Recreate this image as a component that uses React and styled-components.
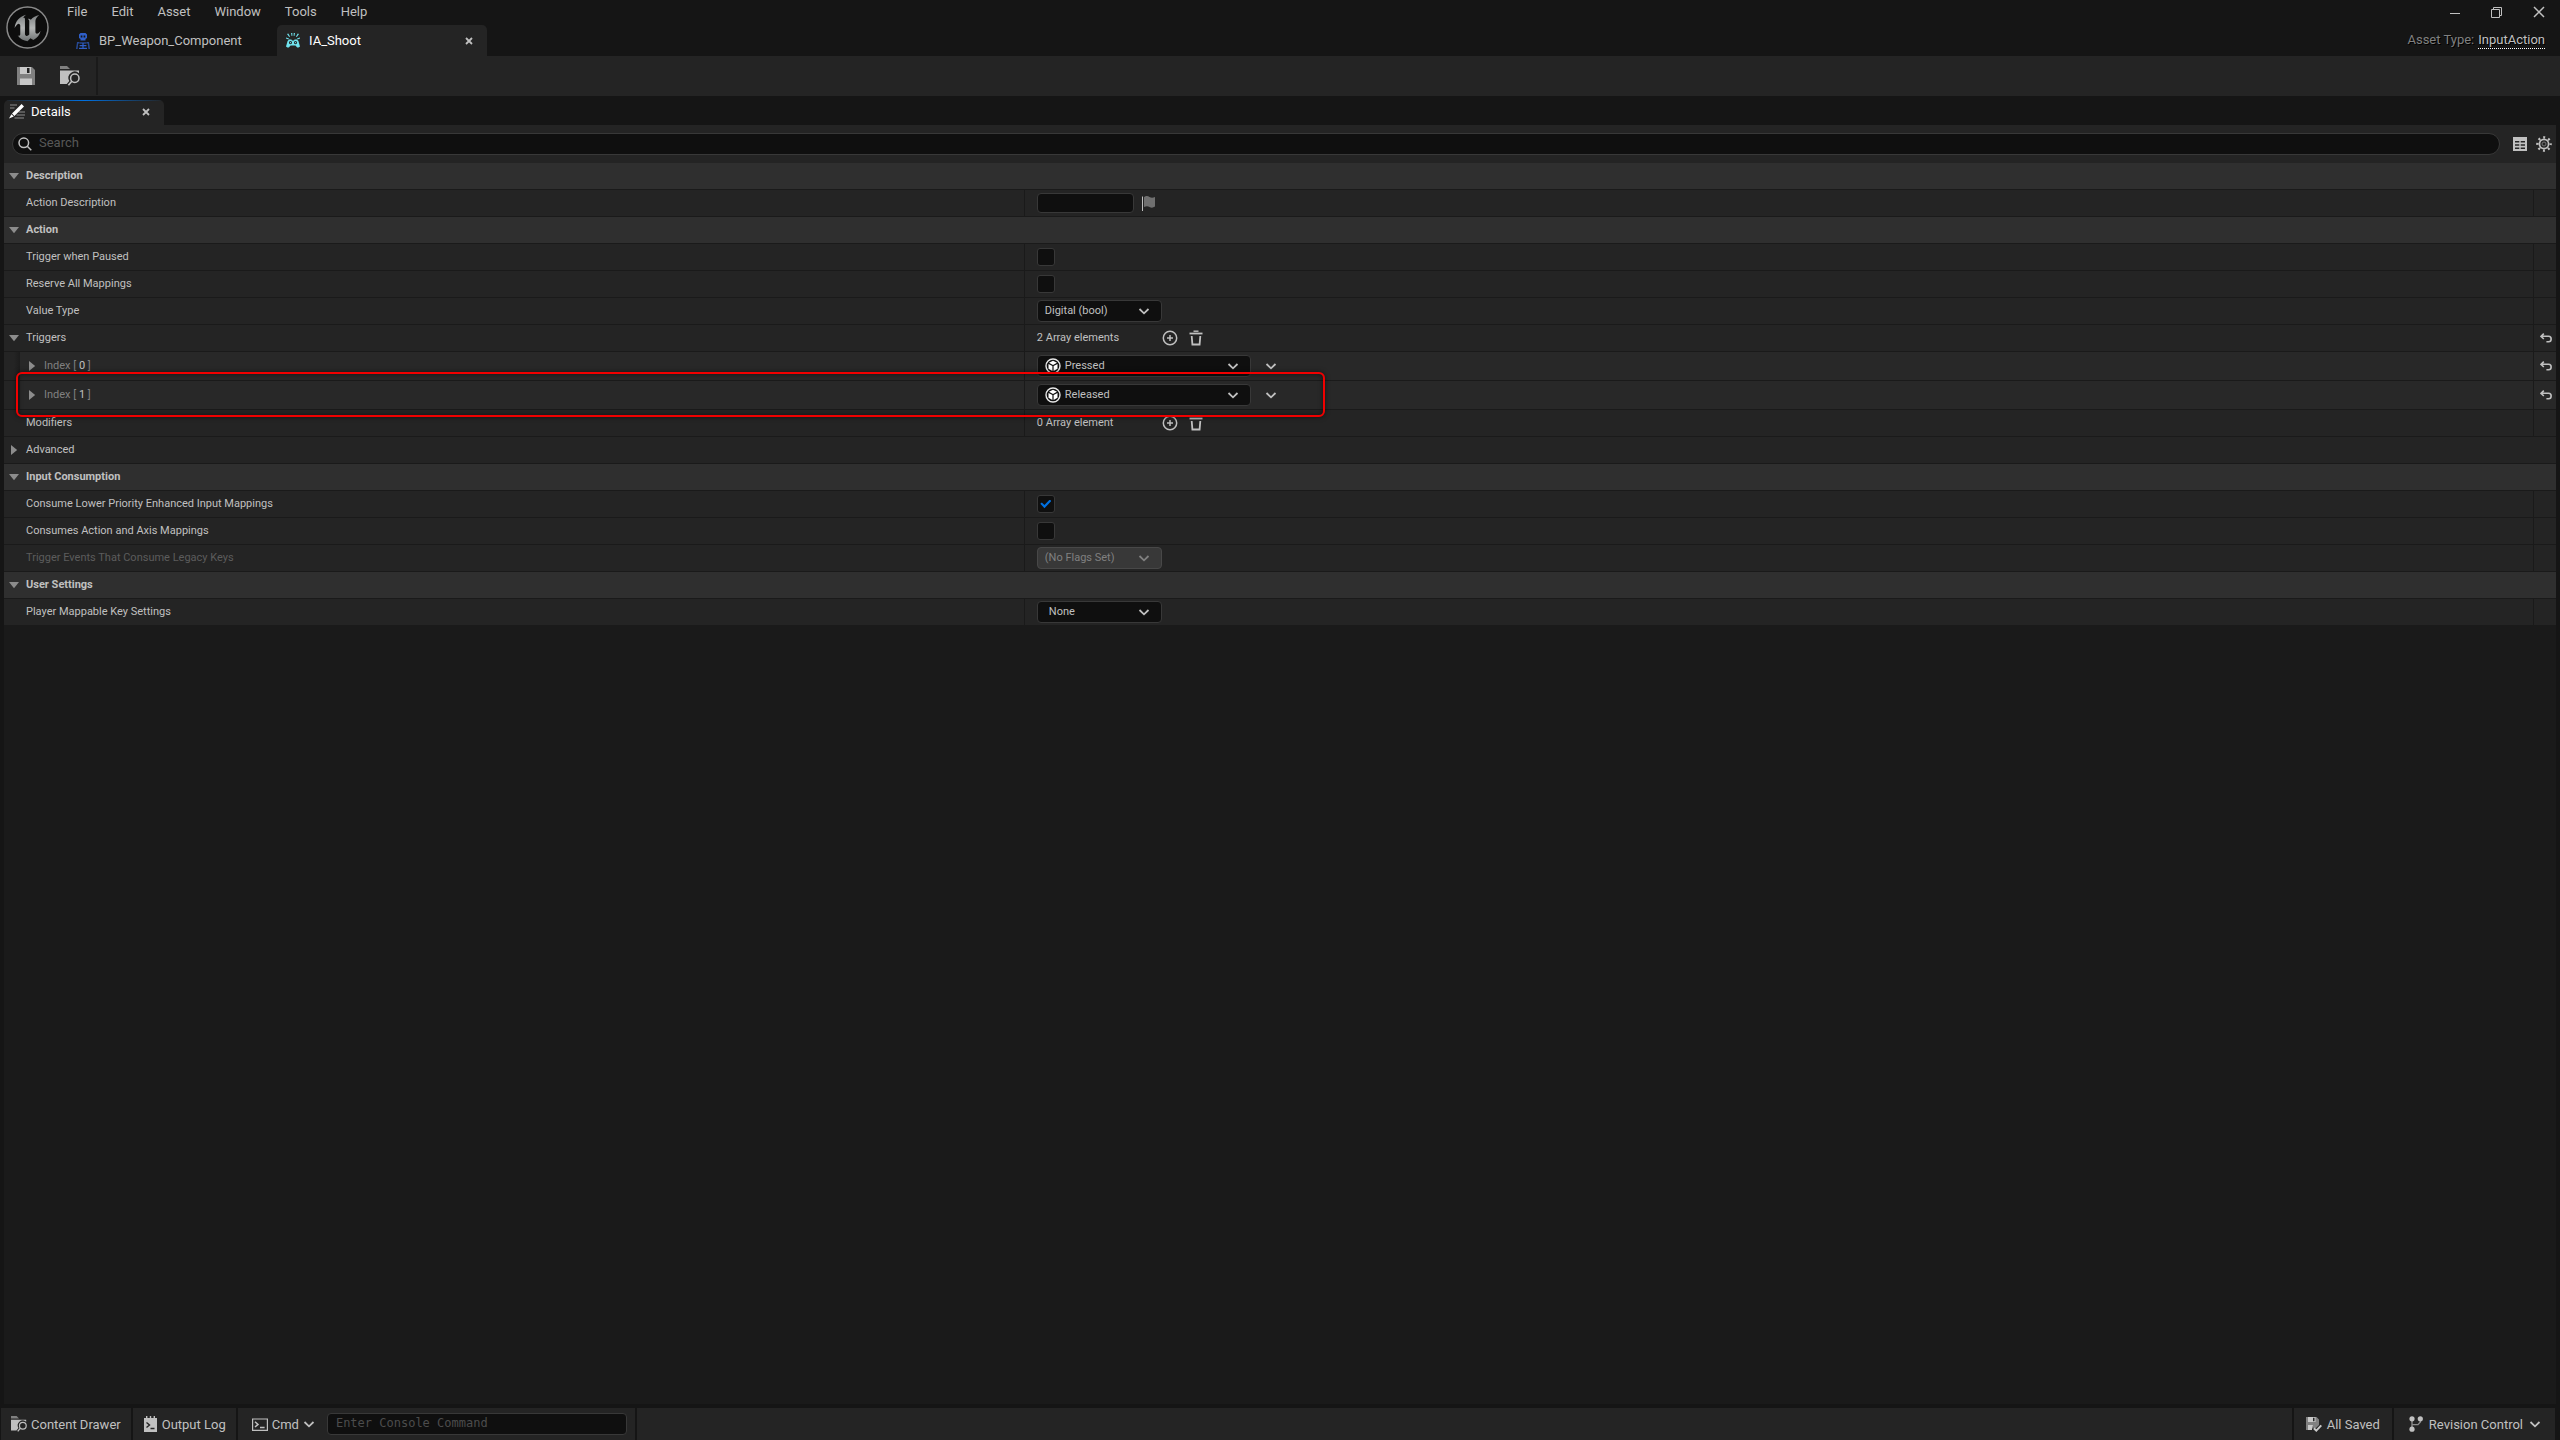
import React, { useState } from "react";
import styled, { createGlobalStyle, css } from "styled-components";

const GlobalStyle = createGlobalStyle`
  * {
    box-sizing: border-box;
  }
  body {
    margin: 0;
    background: #151515;
    color: #c0c0c0;
    font-family: Roboto, "Liberation Sans", sans-serif;
    font-size: 13px;
  }
  button, input, select {
    font: inherit;
    color: inherit;
  }
  button {
    display: flex;
    align-items: center;
    padding: 0;
    border: 0;
    background: none;
  }
  svg {
    display: block;
    flex: none;
  }
`;

/* ---------- icons ---------- */

const Chevron = ({ size = 12 }) => (
  <svg width={size} height={size} viewBox="0 0 12 12" fill="none" stroke="currentColor" strokeWidth="1.8">
    <path d="M1.5 4L6 8.3L10.5 4" />
  </svg>
);

const CloseIcon = () => (
  <svg width="8" height="8" viewBox="0 0 8 8" stroke="currentColor" strokeWidth="1.8">
    <path d="M1 1L7 7M7 1L1 7" />
  </svg>
);

const Logo = () => (
  <svg width="43" height="43" viewBox="0 0 44 44">
    <defs>
      <linearGradient id="metal" x1="0" y1="0" x2="0" y2="1">
        <stop offset="0" stopColor="#7c7f80" />
        <stop offset="0.5" stopColor="#b4b6b6" />
        <stop offset="1" stopColor="#6d7172" />
      </linearGradient>
    </defs>
    <circle cx="22" cy="22" r="21" fill="#0d0d0d" stroke="#8a8a8a" strokeWidth="1.5" />
    <path
      fill="url(#metal)"
      d="M20.5 9C14.5 10.8 9.4 15.2 8.8 22.6C10.4 19.8 12 18 13.4 18.3C14.3 18.5 14.6 19.3 14.6 20.3V28.6C14.6 30.2 13.6 30.8 12 30.2C14.4 33.6 18 35.6 22 36L25 33L28 34.8C32 32.8 34.4 29.6 35.4 25.6C34 27.4 32.4 28.6 31 28.2C30.3 28 30.1 27.2 30.1 26.4V15.4C30.1 13.2 31.6 11.4 34 9.2C30.4 10 27.6 11.6 25.4 14C24.6 13.2 23.6 13 22.4 13.2C23.4 13.8 23.8 14.6 23.8 15.8V29.2C22.8 30.6 21.4 30.9 20.4 30.4C19.6 30 19.4 29.2 19.4 28.2V13.6C19.4 12.2 18.6 11.9 17.4 12.2C18.2 11 19.2 9.9 20.5 9Z"
    />
  </svg>
);

const SkeletonIcon = () => (
  <svg width="14" height="16" viewBox="0 0 14 16" fill="#2f5fc9">
    <path fillRule="evenodd" d="M4.5 0H9.5L11 1.5V5L9.5 6V7.5H4.5V6L3 5V1.5ZM4.7 2.6V4.4H6.4V2.6ZM7.6 2.6V4.4H9.3V2.6Z" />
    <path d="M1 9H3.4V10.4H2.2L1.6 16H0ZM13 9H10.6V10.4H11.8L12.4 16H14Z" opacity="0.7" />
    <path d="M3.6 9.4H10.4V10.6H3.6ZM3.6 12H10.4V13.2H3.6ZM3 14.8H11V16H3ZM6.4 9.4H7.6V16H6.4Z" />
  </svg>
);

const InputActionIcon = () => (
  <svg width="14" height="15" viewBox="0 0 14 15" fill="#6fe3ee">
    <path d="M5 0H6.3V3H5.6ZM7.7 0H9L8.4 3H7.7ZM1 1L2.3 0.6L4 3.6L3.2 4ZM13 1L11.7 0.6L10 3.6L10.8 4ZM0 4.4L3 5.6L2.4 6.4L0 5.6ZM14 4.4L11 5.6L11.6 6.4L14 5.6Z" />
    <path fillRule="evenodd" d="M3 6.6H5.4L6 7.4H8L8.6 6.6H11L12.4 8L14 13.4L12.6 14.5H11.2L9.4 12.4H4.6L2.8 14.5H1.4L0 13.4L1.6 8ZM4.5 8A1.6 1.6 0 1 0 4.5 11.2A1.6 1.6 0 1 0 4.5 8ZM9.5 8A1.6 1.6 0 1 0 9.5 11.2A1.6 1.6 0 1 0 9.5 8Z" />
    <circle cx="4.5" cy="9.6" r="0.7" />
    <circle cx="9.5" cy="9.6" r="0.7" />
  </svg>
);

const SaveIcon = () => (
  <svg width="18" height="18" viewBox="0 0 18 18">
    <path d="M0 0H15L18 3V18H0Z" fill="#808080" />
    <path d="M3 0H14V7H3ZM3 11.5H15V18H3Z" fill="#c8c8c8" />
    <path d="M10 1H12.5V6H10Z" fill="#242424" />
  </svg>
);

const BrowseIcon = ({ size = 20 }) => (
  <svg width={size} height={size} viewBox="0 0 20 20">
    <path d="M0 0H7L10 3H0Z" fill="#808080" />
    <path d="M0 4.6H19V7.2A6.3 6.3 0 0 0 9.3 15L6.8 18H0Z" fill="#c0c0c0" />
    <circle cx="14.8" cy="12.2" r="4.2" fill="none" stroke="#c0c0c0" strokeWidth="1.5" />
    <path d="M11.8 15.2L8.4 19.2" stroke="#c0c0c0" strokeWidth="1.7" />
  </svg>
);

const DetailsIcon = () => (
  <svg width="16" height="15" viewBox="0 0 16 15">
    <path d="M1 1H8M1 4H5.5M9.5 8H16M7.5 11H16M5.5 14H15" stroke="#6a6a6a" strokeWidth="1.4" />
    <path d="M12.6 0L15 2.4L5.4 12L3 9.6ZM2.4 10.2L4.8 12.6L0 14.6Z" fill="#fff" />
  </svg>
);

const SearchIcon = () => (
  <svg width="14" height="14" viewBox="0 0 14 14" fill="none" stroke="#c0c0c0" strokeWidth="1.5">
    <circle cx="5.8" cy="5.8" r="4.8" />
    <path d="M9.3 9.3L13.3 13.3" />
  </svg>
);

const TableIcon = () => (
  <svg width="14" height="14" viewBox="0 0 14 14">
    <path
      fill="#c0c0c0"
      fillRule="evenodd"
      d="M0 0H14V14H0ZM2 4V5.6H6.3V4ZM7.7 4V5.6H12V4ZM2 7.2V8.8H6.3V7.2ZM7.7 7.2V8.8H12V7.2ZM2 10.4V12H6.3V10.4ZM7.7 10.4V12H12V10.4Z"
    />
  </svg>
);

const GearIcon = () => (
  <svg width="16" height="16" viewBox="0 0 16 16" fill="none" stroke="#c0c0c0">
    <circle cx="8" cy="8" r="6.6" strokeWidth="2.4" strokeDasharray="2 3.18" strokeDashoffset="1" />
    <circle cx="8" cy="8" r="4.6" strokeWidth="1.7" />
    <circle cx="8" cy="8" r="2" stroke="#777" strokeWidth="1" />
  </svg>
);

const FlagIcon = () => (
  <svg width="13" height="15" viewBox="0 0 13 15">
    <path d="M0.5 0.5V15" stroke="#c0c0c0" />
    <path d="M2 1.2C4.5 -0.6 6 0 7.5 1C9.3 2 11 1.8 13 1V10.6C11 12 9.3 12 7.5 11C6 10.2 4.5 10 2 11Z" fill="#707070" />
  </svg>
);

const AddIcon = () => (
  <svg width="16" height="16" viewBox="0 0 16 16" fill="none" stroke="#c0c0c0" strokeWidth="1.5">
    <circle cx="8" cy="8" r="6.7" />
    <path d="M8 5V11M5 8H11" />
  </svg>
);

const TrashIcon = () => (
  <svg width="14" height="16" viewBox="0 0 14 16" fill="none" stroke="#c0c0c0">
    <path d="M4.5 1.2H9.5" strokeWidth="1.4" />
    <path d="M0.5 3.5H13.5" strokeWidth="1.8" />
    <path d="M2.7 6L3.4 14.5H10.6L11.3 6" strokeWidth="1.8" />
  </svg>
);

const CubeIcon = () => (
  <svg width="16" height="16" viewBox="0 0 16 16">
    <circle cx="8" cy="8" r="7" fill="none" stroke="#e8e8e8" strokeWidth="1.4" />
    <path d="M8 2.8L12 4.8L8 6.9L4 4.8ZM3.5 6L7.4 8V12.9L3.5 10.7ZM12.5 6L8.6 8V12.9L12.5 10.7Z" fill="#fff" />
  </svg>
);

const ResetIcon = () => (
  <svg width="12" height="10" viewBox="0 0 12 10" fill="none" stroke="#c0c0c0" strokeWidth="1.6">
    <path d="M3.8 0.6L1 3.3L3.8 6M1 3.3H8.6C12 3.3 12 8.8 8.6 8.8H6.4" />
  </svg>
);

const Arrow = ({ open }) => (
  <svg width="10" height="10" viewBox="0 0 10 10" fill="#8c8c8c">
    <path d={open ? "M0 2H10L5 8.2Z" : "M2 0L8.2 5L2 10Z"} />
  </svg>
);

const LogIcon = () => (
  <svg width="13" height="16" viewBox="0 0 13 16">
    <path d="M0 2H2V0H3.4V2H5.8V0H7.2V2H9.6V0H11V2H13V16H0Z" fill="#c0c0c0" />
    <path d="M2.5 6.5L5.5 9L2.5 11.5M6.5 12.5H10.5" fill="none" stroke="#242424" strokeWidth="1.4" />
  </svg>
);

const TerminalIcon = () => (
  <svg width="16" height="13" viewBox="0 0 16 13" fill="none" stroke="#c0c0c0">
    <path d="M0.6 1H15.4V12.4H0.6Z" strokeWidth="1.2" />
    <path d="M3 3.8L6 6.4L3 9M8 9.6H12.6" strokeWidth="1.5" />
  </svg>
);

const SavedIcon = () => (
  <svg width="16" height="15" viewBox="0 0 16 15">
    <path d="M0 0H10.5L13 2.5V8L9 12L7.5 10.5L5.5 12.5V13H0Z" fill="#808080" />
    <path d="M2 0H9.5V5H2ZM2 8H7L6 10.5V13H2Z" fill="#c8c8c8" />
    <path d="M7 0.8H8.5V4.2H7Z" fill="#242424" />
    <path d="M7.8 11.2L10.3 13.6L15.3 8.4" fill="none" stroke="#c8c8c8" strokeWidth="2" />
  </svg>
);

const BranchIcon = () => (
  <svg width="14" height="16" viewBox="0 0 14 16" fill="#c0c0c0">
    <path d="M3 3V13M3 8.6H9L11.4 6V3" fill="none" stroke="#8a8a8a" strokeWidth="1.4" />
    <circle cx="3" cy="2.8" r="2.6" />
    <circle cx="11.3" cy="2.8" r="2.6" />
    <circle cx="3" cy="13.2" r="2.6" />
  </svg>
);

/* ---------- layout ---------- */

const Window = styled.div`
  display: flex;
  flex-direction: column;
  min-height: 100vh;
`;

const TitleBar = styled.header`
  display: flex;
  height: 56px;
`;

const LogoBox = styled.div`
  width: 56px;
  padding: 6px;
`;

const TitleMain = styled.div`
  flex: 1;
  display: flex;
  flex-direction: column;
  justify-content: space-between;
  padding-left: 11px;
`;

const MenuBar = styled.nav`
  display: flex;
  gap: 24px;
  height: 23px;
`;

const TabStrip = styled.div`
  display: flex;
`;

const Tab = styled.button`
  && {
    gap: 9px;
    width: 210px;
    height: 31px;
    padding: 0 14px 0 9px;
    border-radius: 5px 5px 0 0;
    background: ${(p) => (p.$active ? "#242424" : "none")};
    color: ${(p) => (p.$active ? "#fff" : "#c0c0c0")};
  }
  span {
    flex: 1;
    text-align: left;
  }
  svg:last-child {
    color: #c0c0c0;
  }
`;

const TitleSide = styled.div`
  display: flex;
  flex-direction: column;
  align-items: flex-end;
  gap: 8px;
  padding-right: 15px;
`;

const WindowButtons = styled.div`
  display: flex;
  gap: 31px;
  height: 24px;
`;

const AssetType = styled.div`
  display: flex;
  gap: 4px;
  line-height: 16px;
  color: #808080;
  text-shadow: 1px 1px 0 #000;
  a {
    color: #c0c0c0;
    text-decoration: none;
    border-bottom: 1px dotted #fff;
  }
`;

const Toolbar = styled.div`
  display: flex;
  align-items: center;
  height: 40px;
  background: #242424;
`;

const ToolGroup = styled.div`
  display: flex;
  align-items: center;
  gap: 25px;
  height: 38px;
  padding: 0 16px 0 17px;
  border-right: 2px solid #1a1a1a;
`;

const Dock = styled.main`
  flex: 1;
  display: flex;
  flex-direction: column;
  padding: 4px;
`;

const DetailsTab = styled.div`
  display: flex;
  align-items: center;
  gap: 6px;
  width: 160px;
  height: 25px;
  padding: 0 14px 2px 5px;
  border-radius: 5px 5px 0 0;
  background: linear-gradient(90deg, #242424, #0070e0 50%, #242424) top / 100% 1px no-repeat #242424;
  color: #fff;
  span {
    flex: 1;
  }
  button {
    color: #c0c0c0;
  }
`;

const Panel = styled.section`
  flex: 1;
  background: #1a1a1a;
`;

const SearchRow = styled.div`
  display: flex;
  align-items: center;
  gap: 9px;
  height: 38px;
  padding: 0 4px 0 8px;
  background: #242424;
`;

const SearchBox = styled.label`
  flex: 1;
  display: flex;
  align-items: center;
  gap: 7px;
  height: 22px;
  margin-right: 4px;
  padding: 0 5px;
  border: 1px solid #383838;
  border-radius: 11px;
  background: #0f0f0f;
  input {
    flex: 1;
    height: 20px;
    padding: 0 0 3px;
    border: 0;
    outline: 0;
    background: none;
  }
  input::placeholder {
    color: #575757;
  }
`;

const Grid = styled.div`
  font-size: 11px;
`;

/* keeps the letters a little above the middle line of the arrows and boxes */
const Label = styled.span`
  padding-bottom: 2px;
`;

const CategoryRow = styled.button`
  && {
    width: 100%;
    height: 27px;
    gap: 7px;
    padding-left: 5px;
    border-bottom: 1px solid #1a1a1a;
    background: #2f2f2f;
    font-weight: 700;
  }
`;

const Row = styled.div`
  position: relative;
  display: grid;
  grid-template-columns: ${(p) => (p.$wide ? "1fr" : "40% 1fr 23px")};
  height: ${(p) => (p.$nested ? 29 : 27)}px;
  border-bottom: 1px solid #1a1a1a;
  background: ${(p) => (p.$nested ? "#282828" : "#242424")};
`;

const Name = styled.div`
  display: flex;
  align-items: center;
  gap: 7px;
  padding-left: ${(p) => (p.$arrow ? 5 : 22)}px;
  border-right: ${(p) => (p.$wide ? 0 : "1px solid #1a1a1a")};
  color: ${(p) => (p.$dim ? "#5c5c5c" : "#c0c0c0")};
  ${(p) =>
    p.$nested &&
    css`
      padding-left: 23px;
      color: #808080;
      background: linear-gradient(90deg, #242424 10px, #1c1c1c 16px, #282828 16px);
    `}
  b {
    font-weight: 400;
    color: #c0c0c0;
  }
`;

const Value = styled.div`
  display: flex;
  align-items: center;
  padding-left: 12px;
`;

const Reset = styled.div`
  display: flex;
  align-items: center;
  padding-left: 6px;
  border-left: 1px solid #1a1a1a;
`;

const TextInput = styled.input`
  width: 97px;
  height: 20px;
  margin-right: 8px;
  border: 1px solid #383838;
  border-radius: 4px;
  background: #0f0f0f;
`;

const CheckBox = styled.input`
  appearance: none;
  display: grid;
  place-items: center;
  width: 18px;
  height: 18px;
  margin: 0;
  border: 1px solid #383838;
  border-radius: 3px;
  background: #0f0f0f;
  &:checked::before {
    content: "";
    width: 11px;
    height: 9px;
    background: #0070e0;
    clip-path: polygon(0 48%, 14% 32%, 38% 60%, 86% 0, 100% 16%, 38% 96%);
  }
`;

const SelectBox = styled.div`
  display: grid;
  grid-template-columns: 1fr 12px;
  align-items: center;
  width: ${(p) => (p.$wide ? 214 : 125)}px;
  height: 22px;
  padding-right: 11px;
  border: 1px solid ${(p) => (p.$disabled ? "#484848" : "#383838")};
  border-radius: 4px;
  background: ${(p) => (p.$disabled ? "#383838" : "#0f0f0f")};
  color: ${(p) => (p.$disabled ? "#808080" : "#c0c0c0")};
  ${(p) =>
    p.$wide &&
    css`
      grid-template-columns: 16px 1fr 12px;
      padding-left: 7px;
    `}
  select {
    appearance: none;
    width: 100%;
    padding: 0 0 2px ${(p) => (p.$wide ? 4 : p.$inset ? 11 : 7)}px;
    border: 0;
    outline: 0;
    background: none;
    opacity: 1;
  }
`;

const MoreButton = styled.button`
  && {
    margin-left: 14px;
  }
`;

const ArrayCount = styled(Label)`
  width: 125px;
`;

const ArrayButtons = styled.div`
  display: flex;
  gap: 11px;
`;

const Highlight = styled.div`
  position: absolute;
  z-index: 1;
  top: -9px;
  bottom: -8px;
  left: 12px;
  width: calc(40% + 288px);
  border: 2px solid #f00000;
  border-radius: 6px;
  box-shadow: 0 0 5px rgba(0, 0, 0, 0.5), inset 0 0 5px rgba(0, 0, 0, 0.5);
  pointer-events: none;
`;

const StatusBar = styled.footer`
  display: flex;
  height: 32px;
  margin: 0 3px 0 1px;
  background: #242424;
`;

const StatusItem = styled.div`
  display: flex;
  align-items: center;
  gap: 12px;
  padding: 0 ${(p) => p.$end || 10}px 0 ${(p) => p.$start || 10}px;
  border-right: 2px solid #151515;
  button {
    gap: ${(p) => p.$gap || 5}px;
  }
`;

const Spacer = styled.div`
  flex: 1;
  border-right: 2px solid #151515;
`;

const ConsoleInput = styled.input`
  && {
    width: 300px;
    height: 22px;
    padding: 0 8px 2px;
    border: 1px solid #383838;
    border-radius: 4px;
    background: #0f0f0f;
    font: 12px "DejaVu Sans Mono", monospace;
  }
  &::placeholder {
    color: #4c4c4c;
  }
`;

/* ---------- rows ---------- */

const Property = ({ id, label, dim, children }) => (
  <Row>
    <Name as="label" htmlFor={id} $dim={dim}>
      <Label>{label}</Label>
    </Name>
    <Value>{children}</Value>
    <Reset />
  </Row>
);

const CheckProperty = ({ id, label, checked }) => {
  const [on, setOn] = useState(!!checked);
  return (
    <Property id={id} label={label}>
      <CheckBox id={id} type="checkbox" checked={on} onChange={() => setOn(!on)} />
    </Property>
  );
};

const Select = ({ id, value, label, icon, ...props }) => (
  <SelectBox {...props}>
    {icon}
    <select id={id} aria-label={label} disabled={props.$disabled}>
      <option>{value}</option>
    </select>
    <Chevron />
  </SelectBox>
);

const ArrayTools = ({ count }) => (
  <>
    <ArrayCount>{count}</ArrayCount>
    <ArrayButtons>
      <button aria-label="Add element">
        <AddIcon />
      </button>
      <button aria-label="Remove all elements">
        <TrashIcon />
      </button>
    </ArrayButtons>
  </>
);

const ResetButton = () => (
  <button aria-label="Reset to default">
    <ResetIcon />
  </button>
);

const Category = ({ title }) => (
  <CategoryRow>
    <Arrow open />
    <Label>{title}</Label>
  </CategoryRow>
);

const TriggerRow = ({ index, value, highlighted }) => (
  <Row $nested>
    <Name $nested>
      <Arrow />
      <Label>
        Index [ <b>{index}</b> ]
      </Label>
    </Name>
    <Value>
      <Select $wide icon={<CubeIcon />} value={value} label={`Trigger ${index}`} />
      <MoreButton aria-label="Element options">
        <Chevron />
      </MoreButton>
    </Value>
    <Reset>
      <ResetButton />
    </Reset>
    {highlighted && <Highlight />}
  </Row>
);

const menus = ["File", "Edit", "Asset", "Window", "Tools", "Help"];

export default function App() {
  return (
    <Window>
      <GlobalStyle />
      <TitleBar>
        <LogoBox>
          <Logo />
        </LogoBox>
        <TitleMain>
          <MenuBar>
            {menus.map((menu) => (
              <button key={menu}>{menu}</button>
            ))}
          </MenuBar>
          <TabStrip>
            <Tab>
              <SkeletonIcon />
              <span>BP_Weapon_Component</span>
            </Tab>
            <Tab $active>
              <InputActionIcon />
              <span>IA_Shoot</span>
              <CloseIcon />
            </Tab>
          </TabStrip>
        </TitleMain>
        <TitleSide>
          <WindowButtons>
            <button aria-label="Minimize">
              <svg width="10" height="11" viewBox="0 0 10 11" stroke="#c0c0c0">
                <path d="M0 6.5H10" />
              </svg>
            </button>
            <button aria-label="Restore">
              <svg width="11" height="11" viewBox="0 0 11 11" fill="none" stroke="#c0c0c0">
                <path d="M0.5 2.5H8.5V10.5H0.5ZM2.5 2.5V0.5H10.5V8.5H8.5" />
              </svg>
            </button>
            <button aria-label="Close">
              <svg width="12" height="12" viewBox="0 0 12 12" stroke="#c0c0c0" strokeWidth="1.5">
                <path d="M1 1L11 11M11 1L1 11" />
              </svg>
            </button>
          </WindowButtons>
          <AssetType>
            Asset Type: <a href="#asset">InputAction</a>
          </AssetType>
        </TitleSide>
      </TitleBar>

      <Toolbar>
        <ToolGroup>
          <button aria-label="Save">
            <SaveIcon />
          </button>
          <button aria-label="Browse to asset">
            <BrowseIcon />
          </button>
        </ToolGroup>
      </Toolbar>

      <Dock>
        <DetailsTab>
          <DetailsIcon />
          <span>Details</span>
          <button aria-label="Close details">
            <CloseIcon />
          </button>
        </DetailsTab>
        <Panel>
          <SearchRow>
            <SearchBox>
              <SearchIcon />
              <input placeholder="Search" aria-label="Search" />
            </SearchBox>
            <button aria-label="Property matrix">
              <TableIcon />
            </button>
            <button aria-label="Settings">
              <GearIcon />
            </button>
          </SearchRow>

          <Grid>
            <Category title="Description" />
            <Property id="description" label="Action Description">
              <TextInput id="description" />
              <button aria-label="Localization">
                <FlagIcon />
              </button>
            </Property>

            <Category title="Action" />
            <CheckProperty id="paused" label="Trigger when Paused" />
            <CheckProperty id="reserve" label="Reserve All Mappings" />
            <Property id="valueType" label="Value Type">
              <Select id="valueType" value="Digital (bool)" />
            </Property>
            <Row>
              <Name $arrow>
                <Arrow open />
                <Label>Triggers</Label>
              </Name>
              <Value>
                <ArrayTools count="2 Array elements" />
              </Value>
              <Reset>
                <ResetButton />
              </Reset>
            </Row>
            <TriggerRow index={0} value="Pressed" />
            <TriggerRow index={1} value="Released" highlighted />
            <Row>
              <Name>
                <Label>Modifiers</Label>
              </Name>
              <Value>
                <ArrayTools count="0 Array element" />
              </Value>
              <Reset />
            </Row>
            <Row $wide>
              <Name $arrow $wide>
                <Arrow />
                <Label>Advanced</Label>
              </Name>
            </Row>

            <Category title="Input Consumption" />
            <CheckProperty id="consumeLower" label="Consume Lower Priority Enhanced Input Mappings" checked />
            <CheckProperty id="consumeAxis" label="Consumes Action and Axis Mappings" />
            <Property id="legacyKeys" label="Trigger Events That Consume Legacy Keys" dim>
              <Select id="legacyKeys" value="(No Flags Set)" $disabled />
            </Property>

            <Category title="User Settings" />
            <Property id="keySettings" label="Player Mappable Key Settings">
              <Select id="keySettings" value="None" $inset />
            </Property>
          </Grid>
        </Panel>
      </Dock>

      <StatusBar>
        <StatusItem $gap={4}>
          <button>
            <BrowseIcon size={16} />
            Content Drawer
          </button>
        </StatusItem>
        <StatusItem $start={11}>
          <button>
            <LogIcon />
            Output Log
          </button>
        </StatusItem>
        <StatusItem $start={14} $end={8} $gap={4}>
          <button>
            <TerminalIcon />
            Cmd
            <Chevron />
          </button>
          <ConsoleInput placeholder="Enter Console Command" aria-label="Console command" />
        </StatusItem>
        <Spacer />
        <StatusItem $start={12} $end={12}>
          <button>
            <SavedIcon />
            All Saved
          </button>
        </StatusItem>
        <StatusItem $start={15} $end={14} $gap={6}>
          <button>
            <BranchIcon />
            Revision Control
            <Chevron />
          </button>
        </StatusItem>
      </StatusBar>
    </Window>
  );
}
